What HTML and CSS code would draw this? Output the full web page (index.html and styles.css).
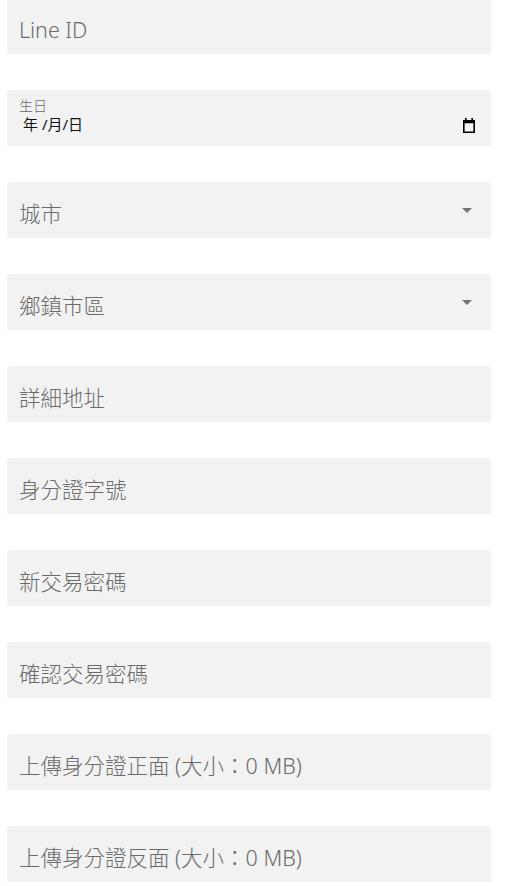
FILE: index.html
```html
<!DOCTYPE html>
<html lang="zh-Hant">
<head>
<meta charset="utf-8">
<title>Form</title>
<link rel="stylesheet" href="styles.css">
</head>
<body>
<form class="form">
  <div class="field"><span class="ph">Line ID</span></div>
  <div class="field date">
    <span class="small-label">生日</span>
    <span class="date-value">年 /月/日</span>
    <svg class="cal" width="14" height="15" viewBox="0 0 14 15" aria-hidden="true">
      <rect x="3" y="0" width="1.6" height="3" fill="#000"/>
      <rect x="9.4" y="0" width="1.6" height="3" fill="#000"/>
      <path d="M1 2 H13 V15 H1 Z M2.6 5.2 V13.4 H11.4 V5.2 Z" fill="#000" fill-rule="evenodd"/>
    </svg>
  </div>
  <div class="field select"><span class="ph">城市</span><span class="arrow"></span></div>
  <div class="field select"><span class="ph">鄉鎮市區</span><span class="arrow"></span></div>
  <div class="field"><span class="ph">詳細地址</span></div>
  <div class="field"><span class="ph">身分證字號</span></div>
  <div class="field"><span class="ph">新交易密碼</span></div>
  <div class="field"><span class="ph">確認交易密碼</span></div>
  <div class="field"><span class="ph">上傳身分證正面 (大小：0 MB)</span></div>
  <div class="field"><span class="ph">上傳身分證反面 (大小：0 MB)</span></div>
</form>
</body>
</html>
```
FILE: styles.css
```css
html, body {
  margin: 0;
  padding: 0;
  background: #fff;
}
body {
  font-family: "Noto Sans", "Noto Sans CJK TC", sans-serif;
  overflow: hidden;
}
.form {
  display: flex;
  flex-direction: column;
  gap: 36px;
  width: 484px;
  margin: -2px 0 0 7px;
}
.field {
  position: relative;
  height: 56px;
  box-sizing: border-box;
  background: #f2f2f2;
  border-radius: 4px 4px 0 0;
  display: flex;
  align-items: center;
  padding: 7px 13px 0 12px;
}
.ph {
  font-size: 21.5px;
  font-weight: 300;
  color: #6a6a6a;
  line-height: 1;
  white-space: nowrap;
}
.select {
  justify-content: space-between;
  padding-right: 19px;
}
.arrow {
  width: 0;
  height: 0;
  border-left: 5px solid transparent;
  border-right: 5px solid transparent;
  border-top: 5px solid #757575;
  margin-top: -7px;
}
.date {
  flex-direction: column;
  align-items: flex-start;
  justify-content: flex-start;
  gap: 2px;
  padding: 8px 15px 0 12px;
}
.small-label {
  font-size: 14px;
  font-weight: 300;
  line-height: 16px;
  color: #6a6a6a;
}
.date-value {
  font-size: 15px;
  line-height: 17px;
  color: #111;
  padding-left: 4px;
}
.cal {
  position: absolute;
  right: 15px;
  top: 28px;
}
```
